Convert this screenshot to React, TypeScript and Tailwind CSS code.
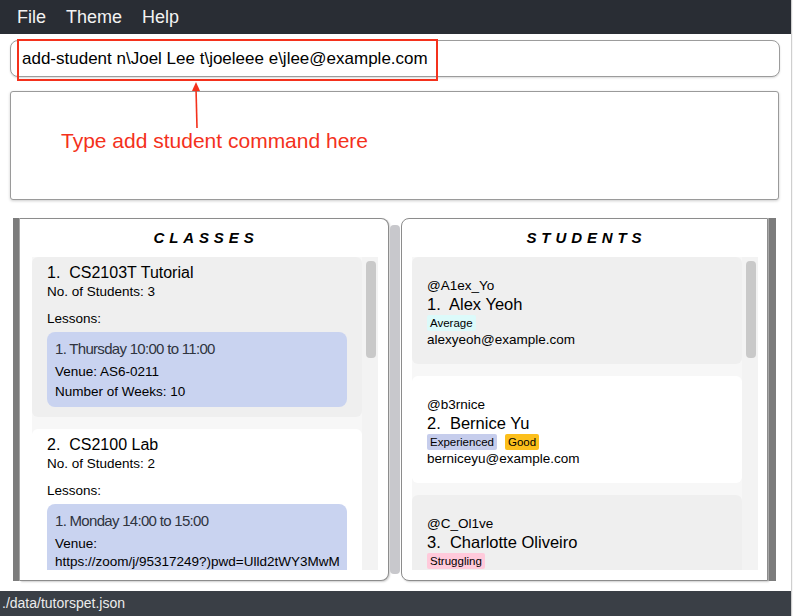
import React from 'react';

type Lesson = { title: string; venue: string[]; weeks?: string };
type ClassItem = { title: string; count: number; lessons: Lesson[] };
type Student = { handle: string; name: string; tags: { label: string; bg: string }[]; email: string };

const classes: ClassItem[] = [
  {
    title: '1.  CS2103T Tutorial',
    count: 3,
    lessons: [{ title: '1. Thursday 10:00 to 11:00', venue: ['Venue: AS6-0211'], weeks: 'Number of Weeks: 10' }],
  },
  {
    title: '2.  CS2100 Lab',
    count: 2,
    lessons: [
      {
        title: '1. Monday 14:00 to 15:00',
        venue: ['Venue:', 'https://zoom/j/95317249?)pwd=Ulld2tWY3MwM'],
        weeks: 'Number of Weeks: 13',
      },
    ],
  },
];

const students: Student[] = [
  { handle: '@A1ex_Yo', name: '1.  Alex Yeoh', tags: [{ label: 'Average', bg: 'bg-[#dcfafa]' }], email: 'alexyeoh@example.com' },
  {
    handle: '@b3rnice',
    name: '2.  Bernice Yu',
    tags: [
      { label: 'Experienced', bg: 'bg-[#c6cdec]' },
      { label: 'Good', bg: 'bg-[#fcbf1c]' },
    ],
    email: 'berniceyu@example.com',
  },
  { handle: '@C_Ol1ve', name: '3.  Charlotte Oliveiro', tags: [{ label: 'Struggling', bg: 'bg-[#ffcadb]' }], email: 'charlotte@example.com' },
];

function Scrollbar() {
  return (
    <div className="w-[16px] shrink-0 bg-[#f3f3f3] pt-[4px]">
      <div className="ml-[4px] h-[97px] w-[10px] rounded-[4px] bg-[#c9c9c9]" />
    </div>
  );
}

function ClassCard({ item, index }: { item: ClassItem; index: number }) {
  return (
    <div className={`rounded-[6px] px-[15px] pt-[6px] pb-[10px] ${index % 2 === 0 ? 'bg-[#efefef]' : 'bg-white'}`}>
      <div className="whitespace-pre text-[16px] leading-[20px]">{item.title}</div>
      <div className="text-[13.5px] leading-[18px]">No. of Students: {item.count}</div>
      <div className="mt-[9px] text-[13.5px] leading-[18px]">Lessons:</div>
      {item.lessons.map((l) => (
        <div key={l.title} className="mt-[4px] rounded-[8px] bg-[#c9d3f0] px-[8px] pt-[7px] pb-[6px]">
          <div className="text-[15px] leading-[20px] tracking-[-0.7px] text-[#2f3440]">{l.title}</div>
          <div className="mt-[4px] text-[13.5px] leading-[18px]">
            {l.venue.map((v) => (
              <div key={v} className="whitespace-nowrap">
                {v}
              </div>
            ))}
          </div>
          {l.weeks && <div className="mt-[2px] text-[13.5px] leading-[18px]">{l.weeks}</div>}
        </div>
      ))}
    </div>
  );
}

function StudentCard({ s, index }: { s: Student; index: number }) {
  return (
    <div className={`rounded-[6px] px-[15px] pt-[20px] pb-[15px] ${index % 2 === 0 ? 'bg-[#efefef]' : 'bg-white'}`}>
      <div className="text-[13.5px] leading-[18px]">{s.handle}</div>
      <div className="whitespace-pre text-[16.5px] leading-[18px]">{s.name}</div>
      <div className="mt-[2px] flex gap-[8px]">
        {s.tags.map((t) => (
          <span key={t.label} className={`rounded-[2px] px-[3px] text-[11.5px] leading-[16px] ${t.bg}`}>
            {t.label}
          </span>
        ))}
      </div>
      <div className="text-[13.5px] leading-[18px]">{s.email}</div>
    </div>
  );
}

export default function App() {
  return (
    <div className="flex h-[616px] w-[793px] overflow-hidden bg-white font-['Liberation_Sans',Arial,sans-serif] text-black">
      <div className="relative flex w-[791px] flex-col">
        {/* menu */}
        <div className="flex h-[34px] items-center gap-[20px] bg-[#292d34] px-[17px] text-[18px] text-[#f2f2f2]">
          <span>File</span>
          <span>Theme</span>
          <span>Help</span>
        </div>

        {/* command box */}
        <div className="ml-[10px] mt-[6px] flex h-[37px] w-[770px] items-center rounded-[8px] border border-[#9c9c9c] bg-white pl-[11px] text-[17px] shadow-[0_1px_2px_rgba(0,0,0,0.15)]">
          add-student n\Joel Lee t\joeleee e\jlee@example.com
        </div>

        {/* result box */}
        <div className="ml-[10px] mt-[14px] h-[109px] w-[769px] rounded-[3px] border border-[#9a9a9a] bg-white shadow-[0_1px_3px_rgba(0,0,0,0.2)]" />

        {/* panels */}
        <div className="mt-[18px] flex h-[363px] pl-[13px]">
          <div className="w-[7px] border-r border-[#a8a8a8] bg-[#7c7c7c]" />
          <div className="flex w-[369px] flex-col rounded-r-[8px] border border-l-0 border-[#8c8c8c] bg-white shadow-[1px_1px_2px_rgba(0,0,0,0.2)]">
            <div className="flex h-[38px] items-center justify-center pl-[4px] text-[15px] font-bold italic tracking-[4.9px]">
              CLASSES
            </div>
            <div className="ml-[12px] mr-[10px] flex h-[313px] overflow-hidden bg-[#f7f7f7]">
              <div className="flex w-[330px] shrink-0 flex-col gap-[12px]">
                {classes.map((c, i) => (
                  <ClassCard key={c.title} item={c} index={i} />
                ))}
              </div>
              <Scrollbar />
            </div>
          </div>

          <div className="my-[7px] ml-[1px] w-[10px] rounded-[4px] bg-[#c8c8cc]" />

          <div className="ml-[1px] flex w-[367px] flex-col rounded-l-[8px] border border-[#8c8c8c] bg-white shadow-[1px_1px_2px_rgba(0,0,0,0.2)]">
            <div className="flex h-[38px] items-center justify-center pl-[4px] text-[15px] font-bold italic tracking-[4.9px]">
              STUDENTS
            </div>
            <div className="ml-[10px] mr-[9px] flex h-[313px] overflow-hidden bg-[#f7f7f7]">
              <div className="flex w-[330px] shrink-0 flex-col gap-[12px]">
                {students.map((s, i) => (
                  <StudentCard key={s.handle} s={s} index={i} />
                ))}
              </div>
              <Scrollbar />
            </div>
          </div>
          <div className="w-[8px] border-l border-[#a8a8a8] bg-[#7c7c7c]" />
        </div>

        {/* status bar */}
        <div className="mt-auto flex h-[25px] items-center bg-[#3a3f46] pl-[2px] text-[14px] text-[#ececec]">
          ./data/tutorspet.json
        </div>

        {/* annotation overlay */}
        <div className="pointer-events-none absolute left-[17px] top-[39px] h-[42px] w-[421px] border-2 border-[#f4311c]" />
        <svg className="pointer-events-none absolute left-[187px] top-[80px]" width="18" height="50" viewBox="0 0 18 50">
          <line x1="9" y1="8" x2="10" y2="48" stroke="#f4311c" strokeWidth="1.6" />
          <polygon points="9,2 5,11 13,11" fill="#f4311c" />
        </svg>
        <div className="pointer-events-none absolute left-[61px] top-[128px] text-[21px] leading-[26px] text-[#f4311c]">
          Type add student command here
        </div>
      </div>
      <div className="flex-1 border-l border-[#cfcfcf] bg-[#f6f6f6]" />
    </div>
  );
}
